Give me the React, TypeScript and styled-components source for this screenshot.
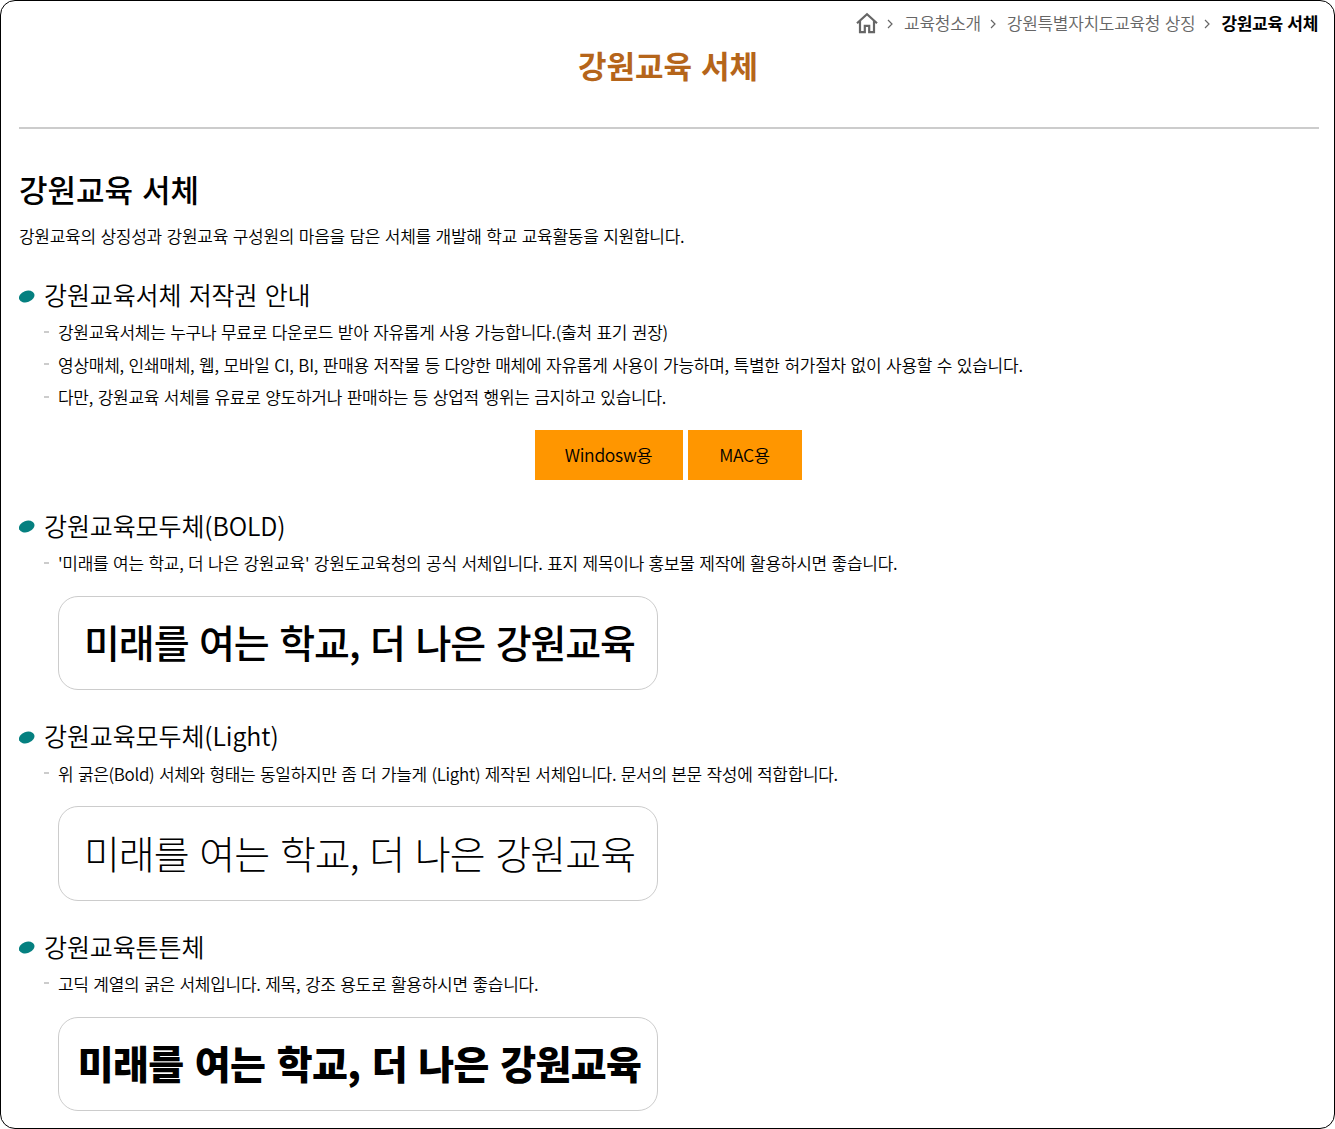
import styled, { createGlobalStyle } from "styled-components";

const GlobalStyle = createGlobalStyle`
  * {
    box-sizing: border-box;
    margin: 0;
    padding: 0;
  }
  body {
    background-color: white;
    color: #000;
    font-family: "Noto Sans CJK KR", sans-serif;
    font-weight: 350;
  }
  ul {
    list-style: none;
  }
`;

const Container = styled.div`
  width: 1335px;
  height: 1129px;
  padding: 0 15px 0 18px;
  border: 1px solid #000;
  border-radius: 15px;
  overflow: hidden;
`;

const Breadcrumb = styled.nav`
  height: 44px;
  padding-right: 1px;
  display: flex;
  justify-content: flex-end;
  align-items: center;
  color: #666;
  font-size: 17px;
  line-height: 44px;
  letter-spacing: -0.3px;
  word-spacing: 1px;
  white-space: nowrap;
`;

const HomeIcon = styled.svg`
  width: 22px;
  height: 22px;
`;

const Arrow = styled.svg`
  width: 6px;
  height: 10px;
  margin: 1px 11px 0 9px;
`;

const Current = styled.strong`
  color: #000;
  font-weight: 700;
`;

const Title = styled.h1`
  height: 84px;
  padding-right: 2px;
  border-bottom: 2px solid #ccc;
  color: #b5651a;
  font-size: 31px;
  font-weight: 700;
  line-height: 40px;
  word-spacing: 2px;
  text-align: center;
`;

const SubTitle = styled.h2`
  margin-top: 40px;
  font-size: 31px;
  font-weight: 500;
  line-height: 40px;
  word-spacing: 2px;
`;

const Text = styled.p`
  margin-top: 11px;
  font-size: 17px;
  line-height: 32px;
  letter-spacing: -0.27px;
  word-spacing: 1.1px;
`;

const Section = styled.section<{ $top: number }>`
  margin-top: ${props => props.$top}px;
`;

const SectionTitle = styled.h3`
  height: 42px;
  padding-bottom: 2px;
  display: flex;
  align-items: center;
  gap: 9px;
  font-size: 25px;
  font-weight: 350;
  line-height: 40px;
  letter-spacing: -0.1px;
  word-spacing: 1.8px;
`;

const Bullet = styled.svg`
  width: 16px;
  height: 13px;
  margin-top: 4px;
`;

const List = styled.ul`
  padding-left: 25px;
`;

const Item = styled.li<{ $spacing?: number }>`
  height: 32.5px;
  display: flex;
  align-items: center;
  font-size: 17px;
  line-height: 32px;
  letter-spacing: ${props => props.$spacing ?? -0.27}px;
  word-spacing: 1.1px;
  white-space: nowrap;
  &::before {
    content: "";
    width: 5px;
    height: 2px;
    margin: 0 9px 1px 0;
    background-color: #ccc;
  }
`;

const Buttons = styled.div`
  margin-top: 16.5px;
  padding-right: 2px;
  display: flex;
  justify-content: center;
  gap: 5px;
`;

const Button = styled.button<{ $width: number }>`
  width: ${props => props.$width}px;
  height: 50px;
  padding-bottom: 1px;
  border: none;
  background-color: #ff9600;
  color: #000;
  font: inherit;
  font-size: 17.5px;
  letter-spacing: -0.3px;
`;

const Sample = styled.div<{ $weight: number; $spacing: number }>`
  width: 600px;
  height: 94.5px;
  margin: 16.5px 0 0 39px;
  padding: 0 0 4px 3px;
  display: flex;
  justify-content: center;
  align-items: center;
  border: 1px solid #ccc;
  border-radius: 20px;
  font-size: 39px;
  font-weight: ${props => props.$weight};
  letter-spacing: ${props => props.$spacing}px;
  word-spacing: 3px;
  white-space: nowrap;
`;

const Separator = () => (
  <Arrow viewBox="0 0 6 10" fill="none" stroke="#666" strokeWidth="1.2">
    <path d="M1 1l4 4-4 4" />
  </Arrow>
);

const Heading = ({ children }: { children: string }) => (
  <SectionTitle>
    <Bullet viewBox="0 0 16 13">
      <ellipse
        cx="7.7"
        cy="6.5"
        rx="8"
        ry="5.7"
        fill="#058080"
        transform="rotate(-20 7.7 6.5)"
      />
    </Bullet>
    {children}
  </SectionTitle>
);

const SAMPLE_TEXT = "미래를 여는 학교, 더 나은 강원교육";

const App = () => {
  return (
    <>
      <GlobalStyle />
      <Container>
        <Breadcrumb>
          <HomeIcon viewBox="0 0 22 22" fill="none" stroke="#666">
            <path d="M1 11.2L11 2.3l10 8.9" strokeWidth="2.2" />
            <path d="M4 9v11.2h4.8v-6.3h4.4v6.3H18V9" strokeWidth="2.2" />
          </HomeIcon>
          <Separator />
          <span>교육청소개</span>
          <Separator />
          <span>강원특별자치도교육청 상징</span>
          <Separator />
          <Current>강원교육 서체</Current>
        </Breadcrumb>
        <Title>강원교육 서체</Title>
        <SubTitle>강원교육 서체</SubTitle>
        <Text>
          강원교육의 상징성과 강원교육 구성원의 마음을 담은 서체를 개발해 학교
          교육활동을 지원합니다.
        </Text>
        <Section $top={22}>
          <Heading>강원교육서체 저작권 안내</Heading>
          <List>
            <Item>
              강원교육서체는 누구나 무료로 다운로드 받아 자유롭게 사용
              가능합니다.(출처 표기 권장)
            </Item>
            <Item $spacing={-0.25}>
              영상매체, 인쇄매체, 웹, 모바일 CI, BI, 판매용 저작물 등 다양한
              매체에 자유롭게 사용이 가능하며, 특별한 허가절차 없이 사용할 수
              있습니다.
            </Item>
            <Item>
              다만, 강원교육 서체를 유료로 양도하거나 판매하는 등 상업적 행위는
              금지하고 있습니다.
            </Item>
          </List>
          <Buttons>
            <Button $width={148}>Windosw용</Button>
            <Button $width={114}>MAC용</Button>
          </Buttons>
        </Section>
        <Section $top={24.9}>
          <Heading>강원교육모두체(BOLD)</Heading>
          <List>
            <Item>
              '미래를 여는 학교, 더 나은 강원교육' 강원도교육청의 공식
              서체입니다. 표지 제목이나 홍보물 제작에 활용하시면 좋습니다.
            </Item>
          </List>
          <Sample $weight={500} $spacing={-1.1}>
            {SAMPLE_TEXT}
          </Sample>
        </Section>
        <Section $top={24.9}>
          <Heading>강원교육모두체(Light)</Heading>
          <List>
            <Item $spacing={-0.32}>
              위 굵은(Bold) 서체와 형태는 동일하지만 좀 더 가늘게 (Light) 제작된
              서체입니다. 문서의 본문 작성에 적합합니다.
            </Item>
          </List>
          <Sample $weight={300} $spacing={-0.95}>
            {SAMPLE_TEXT}
          </Sample>
        </Section>
        <Section $top={24.9}>
          <Heading>강원교육튼튼체</Heading>
          <List>
            <Item>
              고딕 계열의 굵은 서체입니다. 제목, 강조 용도로 활용하시면
              좋습니다.
            </Item>
          </List>
          <Sample $weight={900} $spacing={-0.6}>
            {SAMPLE_TEXT}
          </Sample>
        </Section>
      </Container>
    </>
  );
};

export default App;
